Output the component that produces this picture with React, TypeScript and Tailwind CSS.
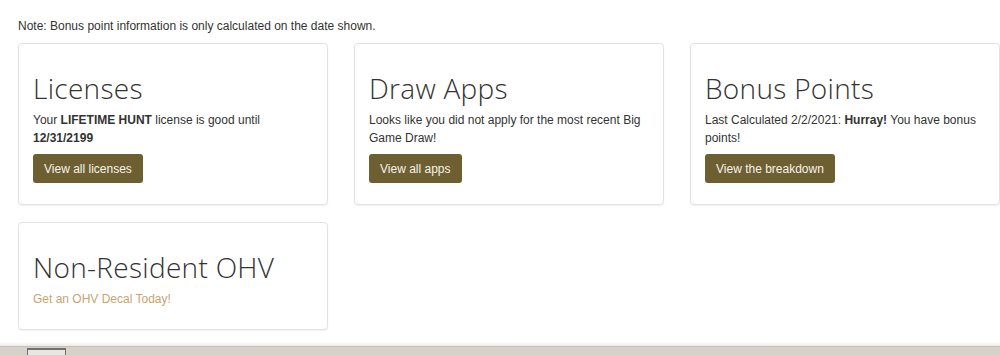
import React from "react";

type Card = {
  title: string;
  body: React.ReactNode;
  button?: string;
  link?: string;
};

const cards: Card[] = [
  {
    title: "Licenses",
    body: (
      <>
        Your <b>LIFETIME HUNT</b> license is good until <b>12/31/2199</b>
      </>
    ),
    button: "View all licenses",
  },
  {
    title: "Draw Apps",
    body: "Looks like you did not apply for the most recent Big Game Draw!",
    button: "View all apps",
  },
  {
    title: "Bonus Points",
    body: (
      <>
        Last Calculated 2/2/2021: <b>Hurray!</b> You have bonus points!
      </>
    ),
    button: "View the breakdown",
  },
  {
    title: "Non-Resident OHV",
    body: null,
    link: "Get an OHV Decal Today!",
  },
];

function DashCard({ card }: { card: Card }) {
  return (
    <div className="bg-white border border-[#e2e2e2] rounded-[4px] shadow-[0_1px_2px_rgba(0,0,0,0.06)] px-[14px] pt-[28px] pb-[21px]">
      <h2 className="font-['Open_Sans',sans-serif] font-light text-[28px] leading-[32px] text-[#333] tracking-[0.3px]">
        {card.title}
      </h2>
      {card.body && (
        <p className="mt-[7px] text-[12px] leading-[18px] text-[#333]">{card.body}</p>
      )}
      {card.button && (
        <button className="mt-[7px] h-[29px] px-[11px] rounded-[3px] bg-[#6e5f33] text-[12px] text-[#f6f3ea]">
          {card.button}
        </button>
      )}
      {card.link && (
        <a className="block mt-[7px] text-[12px] leading-[18px] text-[#c9a36e]">{card.link}</a>
      )}
    </div>
  );
}

export default function App() {
  return (
    <div className="w-[1000px] h-[355px] bg-white flex flex-col font-['Liberation_Sans',Arial,sans-serif] overflow-hidden">
      <div className="flex-1 pl-[18px] pt-[18px]">
        <p className="text-[12px] leading-[16px] text-[#333]">
          Note: Bonus point information is only calculated on the date shown.
        </p>
        <div className="grid grid-cols-3 gap-x-[26px] gap-y-[17px] mt-[9px]">
          {cards.map((c) => (
            <DashCard key={c.title} card={c} />
          ))}
        </div>
      </div>
      {/* window status bar */}
      <div className="h-[4px] bg-gradient-to-b from-white to-[#ecebe8]" />
      <div className="h-[9px] bg-[#d6d2ca] border-t border-[#c4c0b8] relative">
        <div className="absolute left-[27px] top-[1px] w-[39px] h-[8px] border-t-2 border-x border-[#6f6f6f] bg-[#e8e6e0]" />
      </div>
    </div>
  );
}
